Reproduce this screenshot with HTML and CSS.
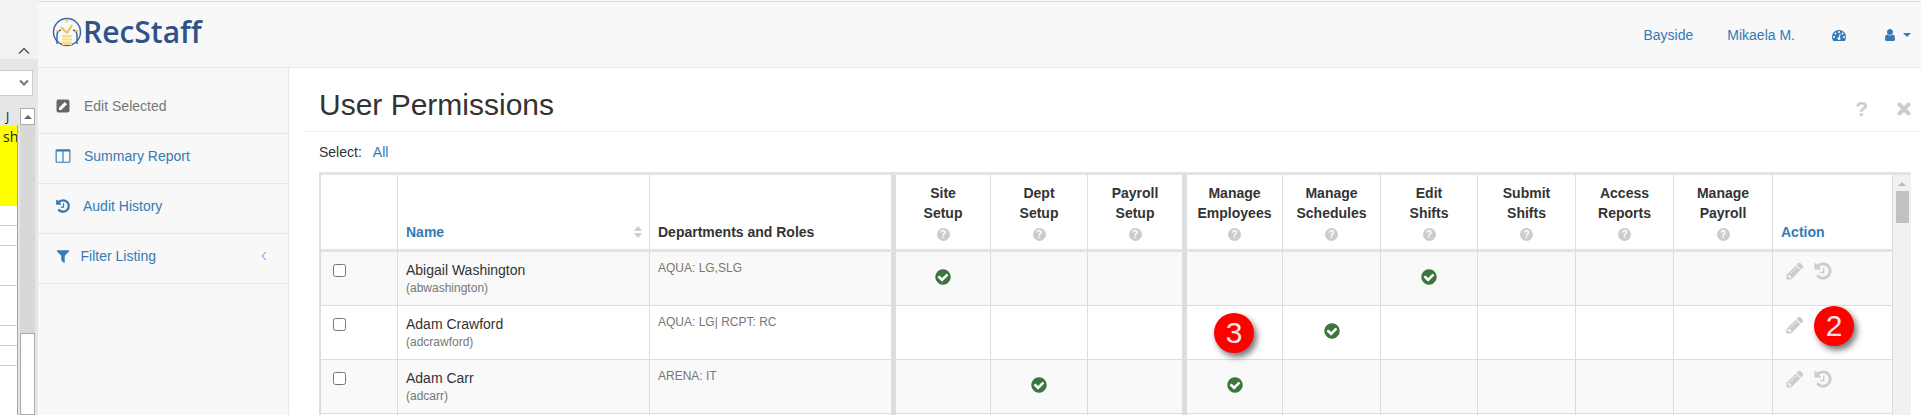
FILE: index.html
```html
<!DOCTYPE html>
<html lang="en">
<head>
<meta charset="utf-8">
<title>User Permissions</title>
<link rel="stylesheet" href="styles.css">
</head>
<body>
<svg class="defs" width="0" height="0" aria-hidden="true">
  <symbol id="i-check" viewBox="0 0 1792 1792"><path d="M1664 896q0 209-103 385.500t-279.500 279.500-385.500 103-385.500-103-279.500-279.500-103-385.500 103-385.500 279.500-279.500 385.500-103 385.500 103 279.500 279.500 103 385.500z" fill="#3c763d"/><path d="M1412 734q0-28-18-46l-91-90q-19-19-45-19t-45 19l-408 407-226-226q-19-19-45-19t-45 19l-91 90q-18 18-18 46 0 27 18 45l362 362q19 19 45 19 27 0 46-19l543-543q18-18 18-45z" fill="#fff"/></symbol>
  <symbol id="i-pencil" viewBox="0 0 1792 1792"><path fill="currentColor" d="M491 1536l91-91-235-235-91 91v107h128v128h107zm523-928q0-22-22-22-10 0-17 7l-542 542q-7 7-7 17 0 22 22 22 10 0 17-7l542-542q7-7 7-17zm-54-192l416 416-832 832h-416v-416zm683 96q0 53-37 90l-166 166-416-416 166-165q36-38 90-38 53 0 91 38l235 234q37 39 37 91z"/></symbol>
  <symbol id="i-history" viewBox="0 0 1792 1792"><path fill="currentColor" d="M1664 896q0 156-61 298t-164 245-245 164-298 61q-172 0-327-72.500t-264-204.500q-7-10-6.500-22.500t8.500-20.500l137-138q10-9 25-9 16 2 23 12 73 95 179 147t225 52q104 0 198.500-40.500t163.500-109.500 109.500-163.500 40.500-198.500-40.500-198.500-109.500-163.500-163.500-109.500-198.500-40.500q-98 0-188 35.500t-160 101.500l137 138q31 30 14 69-17 40-59 40h-448q-26 0-45-19t-19-45v-448q0-42 40-59 39-17 69 14l130 129q107-101 244.500-156.500t284.500-55.500q156 0 298 61t245 164 164 245 61 298zm-640-288v448q0 14-9 23t-23 9h-320q-14 0-23-9t-9-23v-64q0-14 9-23t23-9h224v-352q0-14 9-23t23-9h64q14 0 23 9t9 23z"/></symbol>
</svg>

<div class="app">
  <aside class="strip">
    <div class="strip-top">
      <svg class="strip-chevron" width="12" height="8" viewBox="0 0 12 8"><path d="M1 6.500 6 1.500l5 5" fill="none" stroke="#444" stroke-width="1.200"/></svg>
    </div>
    <div class="strip-select">
      <svg width="10" height="8" viewBox="0 0 10 8"><path d="M1 1.500 5 5.500l4-4" fill="none" stroke="#777" stroke-width="2"/></svg>
    </div>
    <div class="strip-grid">
      <div class="sheet">
        <div class="sheet-head">J</div>
        <div class="sheet-yellow">sh</div>
        <div class="sheet-cell"></div>
        <div class="sheet-cell"></div>
        <div class="sheet-cell tall"></div>
        <div class="sheet-cell tall"></div>
        <div class="sheet-cell"></div>
        <div class="sheet-cell"></div>
        <div class="sheet-rest"></div>
      </div>
      <div class="sheet-scroll">
        <div class="sheet-up"><span class="tri-up"></span></div>
        <div class="sheet-thumb"></div>
      </div>
    </div>
  </aside>

  <div class="page">
    <header class="topbar">
      <a class="logo">
        <svg class="logo-mark" width="30" height="30" viewBox="0 0 30 30">
          <circle cx="15" cy="15" r="13.500" fill="none" stroke="#3f6aa6" stroke-width="1.500"/>
          <path d="M5 27V18q0-4 4-5M25 27V18q0-4-4-5" fill="none" stroke="#3f6aa6" stroke-width="1.500"/>
          <path d="M15 16 9 10M15 16 20 8" fill="none" stroke="#f7c04a" stroke-width="2"/>
          <path d="M15 3v2.500M4 14h3M23 14h3" stroke="#f7c04a" stroke-width="1.500"/>
          <path d="M10 18h10v10H10z" fill="#fbd98a"/>
          <path d="M10 21h10M10 24h10" stroke="#fff" stroke-width="1"/>
        </svg>
        <span class="logo-text">RecStaff</span>
      </a>
      <nav class="topnav">
        <a class="nav-place">Bayside</a>
        <a class="nav-name">Mikaela M.</a>
        <svg class="nav-dash" width="14" height="14" viewBox="0 0 1792 1792"><path fill="#337ab7" d="M384 1152q0-53-37.500-90.500t-90.500-37.500-90.500 37.500-37.500 90.500 37.500 90.500 90.500 37.500 90.500-37.500 37.500-90.500zm192-448q0-53-37.500-90.500t-90.500-37.500-90.500 37.500-37.500 90.500 37.500 90.500 90.500 37.500 90.500-37.500 37.500-90.500zm428 481l101-382q6-26-7.500-48.500t-38.500-29.500-48 6.500-30 39.500l-101 382q-60 5-107 43.500t-63 98.500q-20 77 20 146t117 89 146-20 89-117q16-60-6-117t-72-91zm660-33q0-53-37.500-90.500t-90.500-37.500-90.500 37.500-37.500 90.500 37.500 90.500 90.500 37.500 90.500-37.500 37.500-90.500zm-640-640q0-53-37.500-90.500t-90.500-37.500-90.500 37.500-37.500 90.500 37.500 90.500 90.500 37.500 90.500-37.500 37.500-90.500zm448 192q0-53-37.500-90.500t-90.500-37.500-90.500 37.500-37.500 90.500 37.500 90.500 90.500 37.500 90.500-37.500 37.500-90.500zm320 448q0 261-141 483-19 29-54 29h-1402q-35 0-54-29-141-221-141-483 0-182 71-348t191-286 286-191 348-71 348 71 286 191 191 286 71 348z"/></svg>
        <svg class="nav-user" width="14" height="14" viewBox="0 0 1792 1792"><path fill="#337ab7" d="M1536 1399q0 109-62.500 187t-150.500 78h-854q-88 0-150.500-78t-62.500-187q0-85 8.500-160.500t31.500-152 58.500-131 94-89 134.500-34.500q131 128 313 128t313-128q76 0 134.500 34.500t94 89 58.500 131 31.500 152 8.500 160.500zm-256-887q0 159-112.500 271.500t-271.500 112.500-271.500-112.500-112.500-271.500 112.500-271.500 271.500-112.500 271.500 112.500 112.500 271.500z"/></svg>
        <span class="nav-caret"></span>
      </nav>
    </header>

    <div class="body">
      <nav class="side">
        <a class="side-item muted">
          <svg class="side-icon" width="16" height="16" viewBox="0 0 16 16"><rect x="1.500" y="1.500" width="13" height="13" rx="2" fill="#666"/><path d="M4 12v-2.200L9.800 4 12 6.200 6.200 12z" fill="#fff"/></svg>
          <span class="gap13">Edit Selected</span>
        </a>
        <a class="side-item">
          <svg class="side-icon" width="16" height="16" viewBox="0 0 1792 1792"><path fill="#337ab7" d="M224 1536h608v-1152h-640v1120q0 13 9.500 22.500t22.500 9.500zm1376-32v-1120h-640v1152h608q13 0 22.500-9.500t9.500-22.500zm128-1216v1216q0 66-47 113t-113 47h-1344q-66 0-113-47t-47-113v-1216q0-66 47-113t113-47h1344q66 0 113 47t47 113z"/></svg>
          <span class="gap13">Summary Report</span>
        </a>
        <a class="side-item">
          <svg class="side-icon hist" width="16" height="16"><use href="#i-history"/></svg>
          <span class="gap12">Audit History</span>
        </a>
        <a class="side-item">
          <svg class="side-icon" width="16" height="16" viewBox="0 0 1792 1792"><path fill="#337ab7" d="M1595 295q17 41-14 70l-493 493v742q0 42-39 59-13 5-25 5-27 0-45-19l-256-256q-19-19-19-45v-486l-493-493q-31-29-14-70 17-39 59-39h1280q42 0 59 39z"/></svg>
          <span class="gap10">Filter Listing</span>
          <svg class="side-chevron" width="6" height="10" viewBox="0 0 6 10"><path d="M5 1 1 5l4 4" fill="none" stroke="#5a8cc0" stroke-width="1"/></svg>
        </a>
      </nav>

      <main class="main">
        <div class="head">
          <h1 class="title">User Permissions</h1>
          <div class="head-tools">
            <span class="head-q">?</span>
            <svg class="head-x" width="14" height="14" viewBox="0 0 14 14"><path d="M2.500 2.500l9 9M11.500 2.500l-9 9" stroke="#ccc" stroke-width="4" stroke-linecap="round"/></svg>
          </div>
        </div>
        <div class="select-row"><span>Select:</span><a class="select-all">All</a></div>
        <div class="table-area">
          <div class="table-wrap">
            <table class="grid">
              <colgroup>
                <col class="w77"><col class="w252"><col class="w246"><col class="w95"><col class="w97"><col class="w99"><col class="w96"><col class="w98"><col class="w97"><col class="w98"><col class="w98"><col class="w99"><col class="w120">
              </colgroup>
              <thead>
                <tr>
                  <th></th>
                  <th class="left sortable"><a>Name</a><span class="sort"><span class="sort-up"></span><span class="sort-down"></span></span></th>
                  <th class="left thick">Departments and Roles</th>
                  <th>Site<br>Setup<span class="q">?</span></th>
                  <th>Dept<br>Setup<span class="q">?</span></th>
                  <th class="thick">Payroll<br>Setup<span class="q">?</span></th>
                  <th>Manage<br>Employees<span class="q">?</span></th>
                  <th>Manage<br>Schedules<span class="q">?</span></th>
                  <th>Edit<br>Shifts<span class="q">?</span></th>
                  <th>Submit<br>Shifts<span class="q">?</span></th>
                  <th>Access<br>Reports<span class="q">?</span></th>
                  <th>Manage<br>Payroll<span class="q">?</span></th>
                  <th class="left"><a>Action</a></th>
                </tr>
              </thead>
              <tbody>
                <tr class="odd">
                  <td class="box"><input type="checkbox"></td>
                  <td class="name">Abigail Washington<small>(abwashington)</small></td>
                  <td class="dept thick">AQUA: LG,SLG</td>
                  <td class="on"><svg class="ok"><use href="#i-check"/></svg></td><td></td><td class="thick"></td>
                  <td></td><td></td><td class="on"><svg class="ok"><use href="#i-check"/></svg></td><td></td><td></td><td></td>
                  <td class="act"><svg class="ai"><use href="#i-pencil"/></svg><svg class="ai"><use href="#i-history"/></svg></td>
                </tr>
                <tr>
                  <td class="box"><input type="checkbox"></td>
                  <td class="name">Adam Crawford<small>(adcrawford)</small></td>
                  <td class="dept thick">AQUA: LG| RCPT: RC</td>
                  <td></td><td></td><td class="thick"></td>
                  <td class="badged"><span class="badge badge-3">3</span></td><td class="on"><svg class="ok"><use href="#i-check"/></svg></td><td></td><td></td><td></td><td></td>
                  <td class="act badged"><svg class="ai"><use href="#i-pencil"/></svg><span class="badge badge-2">2</span></td>
                </tr>
                <tr class="odd">
                  <td class="box"><input type="checkbox"></td>
                  <td class="name">Adam Carr<small>(adcarr)</small></td>
                  <td class="dept thick">ARENA: IT</td>
                  <td></td><td class="on"><svg class="ok"><use href="#i-check"/></svg></td><td class="thick"></td>
                  <td class="on"><svg class="ok"><use href="#i-check"/></svg></td><td></td><td></td><td></td><td></td><td></td>
                  <td class="act"><svg class="ai"><use href="#i-pencil"/></svg><svg class="ai"><use href="#i-history"/></svg></td>
                </tr>
                <tr>
                  <td></td><td></td><td class="thick"></td><td></td><td></td><td class="thick"></td><td></td><td></td><td></td><td></td><td></td><td></td><td></td>
                </tr>
              </tbody>
            </table>
          </div>
          <div class="vbar">
            <span class="vbar-up"></span>
            <div class="vbar-thumb"></div>
          </div>
        </div>
      </main>
    </div>
  </div>
</div>
</body>
</html>
```
FILE: styles.css
```css
* { box-sizing: border-box; }
html, body { margin: 0; padding: 0; }
body {
  width: 1921px;
  height: 415px;
  overflow: hidden;
  background: #fff;
  color: #333;
  font-family: "Liberation Sans", Arial, sans-serif;
  font-size: 14px;
  line-height: 20px;
}
.defs { position: absolute; }
.app { display: flex; height: 415px; overflow: hidden; }

/* Left strip: the neighbouring window */
.strip { width: 38px; flex: none; background: #e6e6e6; display: flex; flex-direction: column; overflow: hidden; }
.strip-top { height: 59px; background: #f3f2f1; display: flex; justify-content: flex-end; align-items: flex-end; padding: 0 8px 4px 0; flex: none; }
.strip-chevron { display: block; }
.strip-select { height: 26px; width: 33px; margin-top: 11px; background: #fff; border: 1px solid #ccc; border-left: 0; display: flex; align-items: center; justify-content: flex-end; padding-right: 3px; flex: none; }
.strip-grid { display: flex; margin-top: 12px; flex: 1; min-height: 0; }
.sheet { width: 17.500px; flex: none; }
.sheet-head { height: 17px; padding-left: 6px; font: 12px/17px "Open Sans", "Liberation Sans", sans-serif; color: #111; }
.sheet-yellow { height: 81px; width: 17.500px; background: #ff0; border-right: 1.500px solid #a6a6a6; padding-left: 3px; font: 14px/24px "Open Sans", "Liberation Sans", sans-serif; color: #222; overflow: hidden; }
.sheet-cell { height: 20px; background: #fff; border-right: 1.500px solid #a6a6a6; border-bottom: 1px solid #ccc; }
.sheet-cell.tall { height: 40px; }
.sheet-rest { height: 60px; background: #fff; border-right: 1.500px solid #a6a6a6; }
.sheet-scroll { width: 15px; margin-left: 2.500px; background: #d8d8d8; display: flex; flex-direction: column; }
.sheet-up { height: 17px; background: #fff; border: 1px solid #aaa; display: flex; align-items: center; justify-content: center; }
.tri-up { width: 0; height: 0; border: 4px solid transparent; border-bottom: 4px solid #666; border-top: 0; }
.sheet-thumb { height: 82px; margin-top: 208px; background: #fff; border: 1px solid #aaa; }

/* Page */
.page { flex: 1; min-width: 0; display: flex; flex-direction: column; background: #f8f8f8; padding-top: 1px; }
.topbar { height: 67px; flex: none; border-top: 1px solid #ddd; border-bottom: 1px solid #e7e7e7; display: flex; align-items: center; justify-content: space-between; padding: 0 10px 0 14px; }
a { color: #337ab7; text-decoration: none; }
.logo { display: flex; align-items: center; margin-top: -6px; }
.logo-mark { display: block; flex: none; }
.logo-text { font-family: "Open Sans", sans-serif; font-weight: 600; font-size: 30px; line-height: 34px; color: #2f5288; margin-left: 1px; letter-spacing: 0; }
.topnav { display: flex; align-items: center; }
.nav-place { margin-right: 34px; }
.nav-name { margin-right: 37px; }
.nav-dash { margin-right: 37px; display: block; }
.nav-user { margin-right: 6px; display: block; }
.nav-caret { width: 0; height: 0; border-left: 4px solid transparent; border-right: 4px solid transparent; border-top: 4px solid #337ab7; }

.body { flex: 1; min-height: 0; display: flex; }

/* Sidebar */
.side { width: 250px; flex: none; padding-top: 16px; }
.side-item { height: 50px; display: flex; align-items: center; padding: 0 0 6px 17px; border-bottom: 1px solid #e7e7e7; }
.side-item.muted { color: #777; }
.side-icon { display: block; flex: none; color: #337ab7; }
.gap13 { margin-left: 13px; }
.gap12 { margin-left: 12px; }
.gap10 { margin-left: 9.500px; }
.side-chevron { margin-left: auto; margin-right: 21px; display: block; }

/* Main panel */
.main { flex: 1; min-width: 0; background: #fff; border-left: 1px solid #e7e7e7; padding-left: 15px; overflow: hidden; }
.head { height: 64px; border-bottom: 1px solid #eee; padding: 10px 10px 0 15px; display: flex; align-items: center; justify-content: space-between; }
.title { margin: 0; font-size: 30px; font-weight: 400; line-height: 36px; color: #333; }
.head-tools { display: flex; align-items: center; margin-top: 8px; }
.head-q { font-size: 21px; font-weight: 700; color: #ccc; line-height: 20px; margin-right: 29px; }
.head-x { display: block; }
.select-row { height: 40px; margin-left: 15px; display: flex; align-items: center; }
.select-all { margin-left: 11px; }

.table-area { display: flex; margin-left: 15px; margin-right: 10px; }
.table-wrap { width: 1574px; flex: none; }
.grid { width: 1574px; table-layout: fixed; border-collapse: separate; border-spacing: 0; border-top: 3px solid #e3e3e3; border-left: 2px solid #ddd; }
.w77 { width: 77px; } .w252 { width: 252px; } .w246 { width: 246px; } .w95 { width: 95px; }
.w97 { width: 97px; } .w99 { width: 99px; } .w96 { width: 96px; } .w98 { width: 98px; } .w120 { width: 120px; }

.grid th { height: 77px; padding: 8px 8px 8px; vertical-align: bottom; text-align: center; font-size: 14px; line-height: 20px; font-weight: 700; color: #333; background: #fff; border-right: 1px solid #ddd; border-bottom: 3px solid #e3e3e3; white-space: nowrap; }
.grid th.left { text-align: left; padding-bottom: 7px; }
.grid th.thick, .grid td.thick { border-right: 5px solid #ddd; }
.grid th.sortable { display: table-cell; position: relative; }
.grid th a { display: block; }
.q { display: block; width: 13px; height: 13px; margin: 5px auto 0; border-radius: 50%; background: #ccc; color: #fff; font-size: 10px; line-height: 13px; font-weight: 700; text-align: center; }
.sort { position: absolute; right: 7px; bottom: 11px; display: flex; flex-direction: column; gap: 2px; }
.sort-up, .sort-down { width: 0; height: 0; border-left: 4.500px solid transparent; border-right: 4.500px solid transparent; }
.sort-up { border-bottom: 5px solid #ccc; }
.sort-down { border-top: 5px solid #ccc; }

.grid td { height: 54px; padding: 8px; vertical-align: top; border-right: 1px solid #ddd; border-bottom: 1px solid #ddd; background: #fff; }
.grid tr.odd td { background: #f9f9f9; }
.grid td.box { padding: 12px 0 0 12px; }
.grid td.box input { display: block; margin: 0; width: 13px; height: 13px; }
.grid td.name { line-height: 20px; color: #333; }
.name small { display: block; font-size: 12px; line-height: 16px; color: #777; }
.grid td.dept { font-size: 12px; line-height: 17px; color: #777; }
.grid td.on { text-align: center; padding: 16px 0 0; }
.ok { width: 18px; height: 18px; display: inline-block; vertical-align: top; }
.grid td.act { padding: 9px 0 0 12px; color: #ccc; }
.ai { width: 20px; height: 20px; display: inline-block; vertical-align: top; margin-right: 8px; }
.grid td.badged { position: relative; }
.badge { position: absolute; width: 40px; height: 40px; border-radius: 50%; background: #f00; color: #f6e4e4; font-size: 30px; font-weight: 400; line-height: 40px; text-align: center; box-shadow: 3px 4px 6px rgba(0, 0, 0, .55); }
.badge-3 { left: 27px; top: 7px; }
.badge-2 { left: 41px; top: 0; }

.vbar { width: 18px; flex: none; background: #f1f1f1; border-top: 3px solid #e3e3e3; display: flex; flex-direction: column; align-items: center; }
.vbar-up { width: 0; height: 0; margin-top: 7px; border-left: 4px solid transparent; border-right: 4px solid transparent; border-bottom: 4px solid #bbb; }
.vbar-thumb { width: 13px; height: 32px; margin-top: 5px; background: #c1c1c1; }
```
